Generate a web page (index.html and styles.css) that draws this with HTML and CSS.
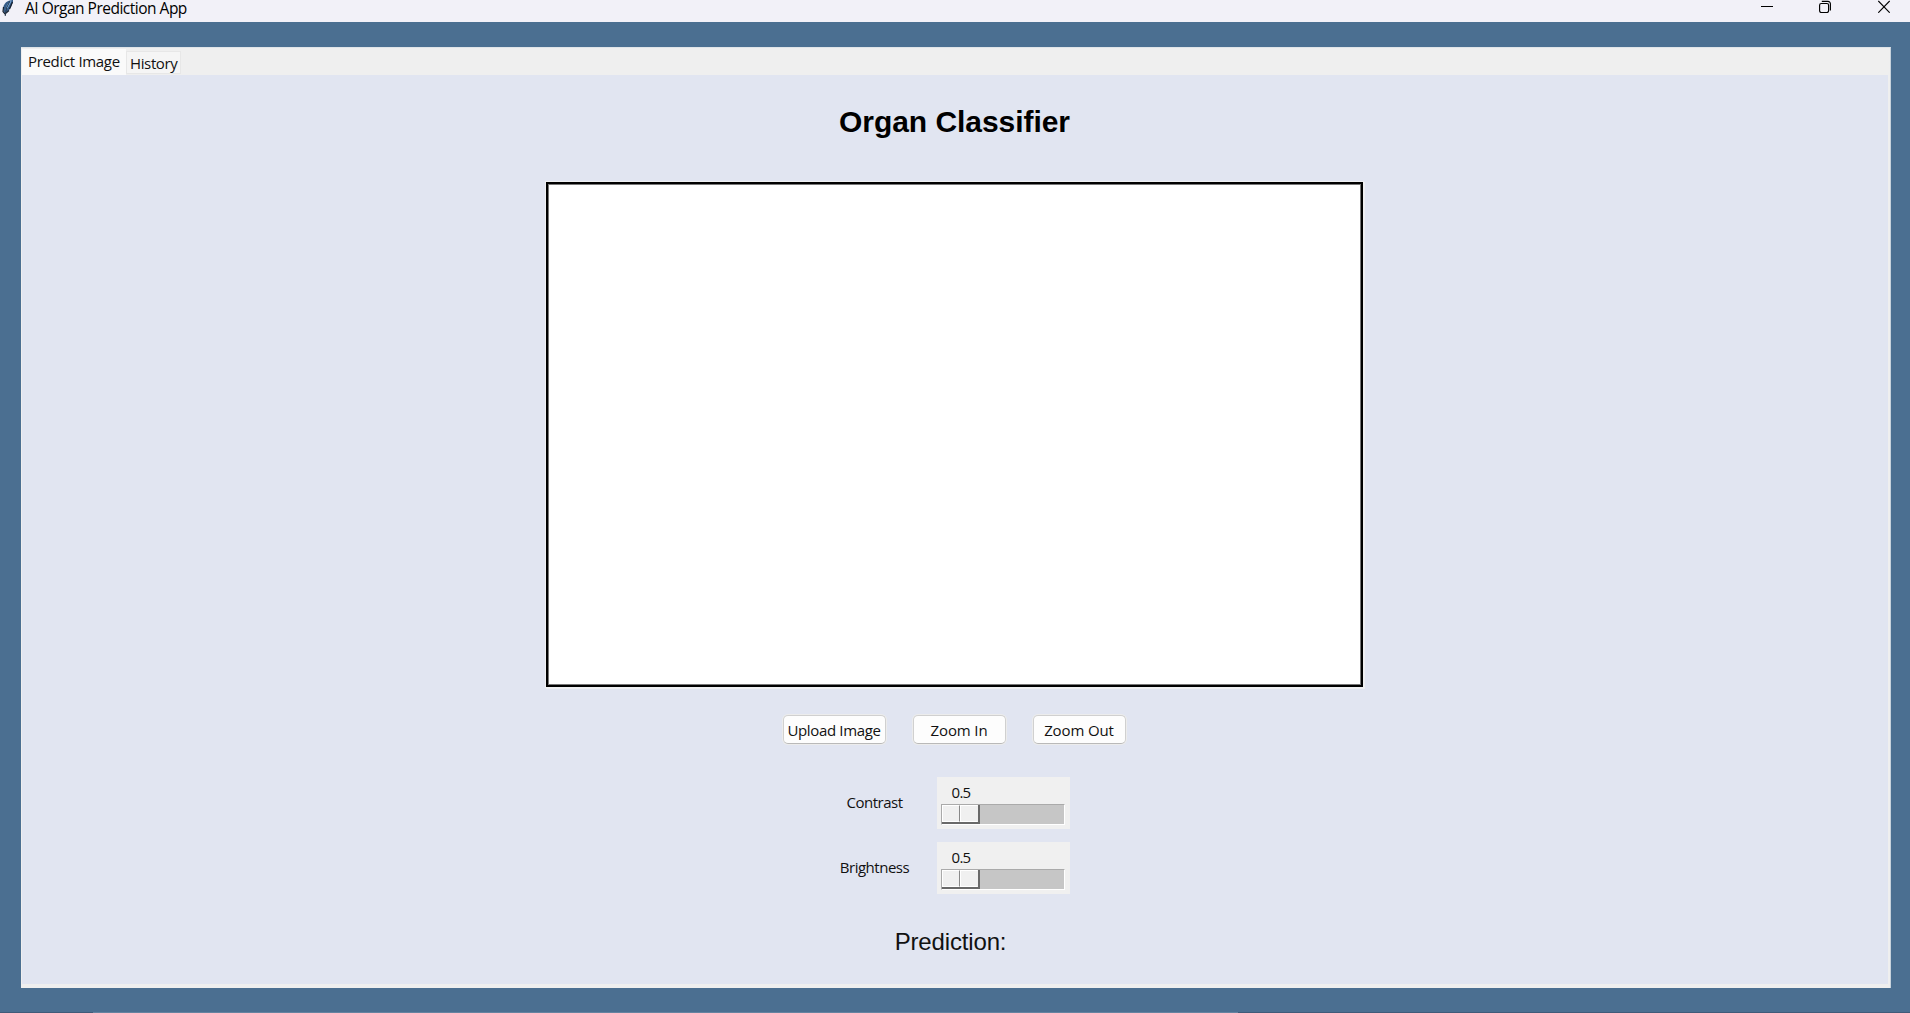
FILE: index.html
```html
<!DOCTYPE html>
<html lang="en">
<head>
<meta charset="utf-8">
<title>AI Organ Prediction App</title>
<link rel="stylesheet" href="styles.css">
</head>
<body>
<header class="titlebar">
  <svg class="feather" width="14" height="18" viewBox="0 0 14 18"><path d="M12.500 0C7 .2 4 3.500 3.200 7.500L3.500 12 5 13.500 8.500 11 11 7 13 2V0z" fill="#355b87"/><path d="M11 0 7 5 5.500 10 8 7.500 11.500 1z" fill="#82b4e6"/><path d="M3.500 7 3 11.500 5 14 9 10.500M12.500 2 9.500 9" fill="none" stroke="#18202d" stroke-width="1.200"/><path d="M10 1 6.500 8 5.200 16" fill="none" stroke="#29384a"/></svg>
  <span class="app-name">AI Organ Prediction App</span>
  <div class="controls">
    <svg width="12" height="13" viewBox="0 0 12 13"><path d="M0 6.500h12" stroke="#000"/></svg>
    <svg width="12" height="13" viewBox="0 0 12 13" fill="none" stroke="#000" stroke-width="1.150"><rect x=".6" y="3.500" width="9" height="9" rx="1.700"/><path d="M2.800 1.400h6.200a2.400 2.400 0 0 1 2.400 2.400v6.700"/></svg>
    <svg width="12" height="13" viewBox="0 0 12 13"><path d="M.3 1 11.700 12.700M11.700 1 .3 12.700" stroke="#000" stroke-width="1.150"/></svg>
  </div>
</header>
<main class="notebook">
  <nav class="tabs">
    <div class="tab selected">Predict Image</div>
    <div class="tab">History</div>
  </nav>
  <section class="page">
    <h1>Organ Classifier</h1>
    <div class="canvas"></div>
    <div class="buttons">
      <button class="upload">Upload Image</button>
      <button>Zoom In</button>
      <button>Zoom Out</button>
    </div>
    <div class="scales">
      <label>Contrast</label>
      <div class="scale"><span class="value">0.5</span><div class="trough"><div class="thumb"><i></i><i></i></div></div></div>
      <label>Brightness</label>
      <div class="scale"><span class="value">0.5</span><div class="trough"><div class="thumb"><i></i><i></i></div></div></div>
    </div>
    <div class="prediction">Prediction:</div>
  </section>
</main>
<footer class="edge"><span></span></footer>
</body>
</html>
```
FILE: styles.css
```css
* { box-sizing: border-box; }
body {
  margin: 0;
  width: 1910px;
  height: 1013px;
  overflow: hidden;
  display: flex;
  flex-direction: column;
  background: #4b6f91;
  color: #111;
  font-family: "Open Sans", "Noto Sans", sans-serif;
  font-size: 15px;
  white-space: nowrap;
}
.titlebar {
  height: 22px;
  flex: none;
  display: flex;
  background: #f2f1f8;
  color: #000;
}
.feather { flex: none; }
.app-name {
  margin-left: 11px;
  font-size: 15.5px;
  line-height: 16px;
  letter-spacing: -0.5px;
}
.controls {
  display: flex;
  gap: 46.7px;
  margin: 0 20px 0 auto;
}
.notebook {
  width: 1870px;
  height: 941px;
  flex: none;
  margin: 25px 0 0 21px;
  padding: 1px 2px 4px 1px;
  background: #efefef;
  border-top: 1px solid #dfe4e8;
  border-right: 1px solid #c7d2dc;
  display: flex;
  flex-direction: column;
}
.tabs { height: 26px; display: flex; flex: none; }
.tab {
  width: 55px;
  height: 23px;
  margin-top: 2px;
  padding-left: 3px;
  background: #f5f5f5;
  border: 1px solid #e7e7e7;
  line-height: 22px;
  letter-spacing: -0.37px;
}
.tab.selected {
  width: 104px;
  height: 27px;
  margin-top: 0;
  padding-left: 6px;
  background: #fafafa;
  border: 0;
  line-height: 25px;
  letter-spacing: -0.32px;
}
.page {
  flex: 1;
  padding-right: 2px;
  background: #e1e5f1;
  display: flex;
  flex-direction: column;
  align-items: center;
}
h1 {
  margin: 29px 0 0 1px;
  font: bold 30px/36px "Liberation Sans", Arial, sans-serif;
  letter-spacing: -0.05px;
  color: #000;
}
.canvas {
  width: 817px;
  height: 505px;
  margin-top: 42px;
  background: #fff;
  border: 2px solid #000;
  box-shadow: inset 0 0 0 1px #777, 0 0 0 1px #eff0f2, 1px 1px 0 1px #eff0f2;
}
.buttons {
  display: flex;
  gap: 25px;
  margin-top: 27px;
}
button {
  width: 93px;
  height: 29px;
  margin: 1px;
  padding: 0;
  background: #fdfdfd;
  border: 1px solid #d0d0d0;
  border-bottom-color: #b9b9b9;
  border-radius: 5px;
  box-shadow: 0 0 0 1px #ececec;
  font: inherit;
  letter-spacing: -0.12px;
  color: #111;
}
button.upload {
  width: 103px;
  letter-spacing: -0.35px;
}
.scales {
  display: grid;
  grid-template-columns: 124px 133px;
  grid-template-rows: 52px 52px;
  row-gap: 13px;
  margin: 32px 26px 0 0;
}
label {
  display: flex;
  align-items: center;
  justify-content: center;
  padding-bottom: 3px;
  letter-spacing: -0.48px;
}
.scale {
  padding: 5px 4px 4px;
  background: #f0f0f0;
}
.value {
  display: block;
  height: 22px;
  padding-left: 11px;
  line-height: 21px;
  letter-spacing: -0.7px;
}
.trough {
  width: 124px;
  height: 21px;
  background: #c6c6c6;
  border: 1px solid #fff;
  border-top-color: #aaa;
  border-left-color: #aaa;
}
.thumb {
  display: flex;
  width: 38px;
  height: 19px;
  border-right: 2px solid #696969;
  border-bottom: 2px solid #696969;
}
.thumb i {
  flex: 1;
  background: #f0f0f0;
  border: 1px solid #fff;
  border-right-color: #f0f0f0;
}
.thumb i:first-child { border-right-color: #888; }
.prediction {
  margin: 33px 7px 0 0;
  font: 24px/30px "Liberation Sans", Arial, sans-serif;
  letter-spacing: -0.15px;
  color: #111;
}
.edge {
  height: 1px;
  margin-top: auto;
  padding-left: 93px;
  background: #405b79;
}
.edge span {
  display: block;
  width: 1145px;
  height: 1px;
  background: #6583a0;
}
```
